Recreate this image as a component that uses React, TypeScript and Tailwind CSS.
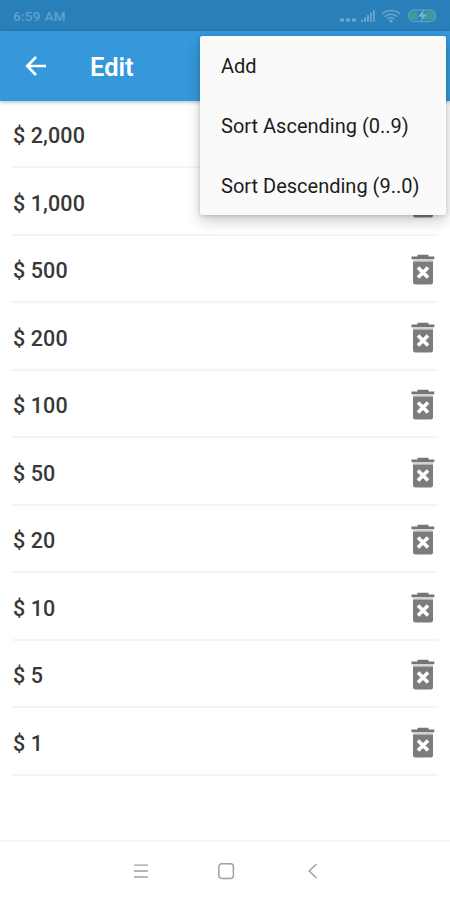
import React from "react";

const AMOUNTS = [
  "$ 2,000",
  "$ 1,000",
  "$ 500",
  "$ 200",
  "$ 100",
  "$ 50",
  "$ 20",
  "$ 10",
  "$ 5",
  "$ 1",
];

const MENU_ITEMS = ["Add", "Sort Ascending (0..9)", "Sort Descending (9..0)"];

const TrashIcon: React.FC = () => (
  <svg width="24" height="32" viewBox="0 0 24 32" className="mt-[4px] shrink-0">
    {/* lid */}
    <path d="M6.5.8h11v1.8h5.8v2.6H.5V2.6h6z" fill="#757575" />
    <path d="M2 5.2h20v2.2H2z" fill="#d2d2d2" />
    {/* bin */}
    <path d="M2 7.4h20V28a2.5 2.5 0 0 1-2.5 2.5h-15A2.5 2.5 0 0 1 2 28z" fill="#7c7c7c" />
    <path d="M7 13.4l10 10M17 13.4l-10 10" stroke="#fff" strokeWidth="3.6" />
  </svg>
);

const StatusBar: React.FC = () => (
  <div className="flex h-[31px] items-center justify-between bg-[#2980b9] pl-[13px] pr-[12px] pt-px">
    <span className="pt-px text-[13.5px] font-medium tracking-[0.3px] text-[#5fa1cf]">6:59 AM</span>
    <svg width="99" height="18" viewBox="0 0 99 18" fill="none">
      <g fill="#6ba6d0">
        <rect x="1" y="11.2" width="4" height="3.2" rx="1.2" />
        <rect x="7" y="11.2" width="4" height="3.2" rx="1.2" />
        <rect x="13" y="11.2" width="4" height="3.2" rx="1.2" />
        {/* signal */}
        <path d="M22 12.5h2v2.3h-2zM25 10.5h2v4.3h-2zM28 8h2v6.8h-2zM31 5.5h1.8v9.3H31zM34 3h1.8v11.8H34z" />
        <circle cx="52" cy="14" r="1.5" />
      </g>
      {/* wifi */}
      <g stroke="#6ba6d0" strokeWidth="1.5">
        <path d="M43 7c5-4.6 13-4.6 18 0" />
        <path d="M45.7 9.6c3.7-3.3 8.9-3.3 12.6 0" />
        <path d="M48.4 12.1c2.2-1.9 5-1.9 7.2 0" />
      </g>
      {/* battery */}
      <rect x="69.7" y="3" width="26.8" height="11.5" rx="5.5" stroke="#5b9dc9" strokeWidth="1.4" />
      <path d="M75 4.6h5l-2.5 5H81l-2 3.2h-4a4 4 0 0 1 0-8.2zM86 4.6h5.5a4 4 0 0 1 0 8.2H84l4-5.2h-3z" fill="#3e9c97" />
      <path d="M85 2.6l-6 7h4l-1.5 5 6.5-7h-4z" fill="#7fb3d6" />
    </svg>
  </div>
);

const AppBar: React.FC = () => (
  <header className="flex h-[69.5px] items-center bg-[#3498db] pl-[25px] shadow-[0_1px_4px_rgba(0,0,0,0.3)]">
    <svg width="22" height="22" viewBox="0 0 22 22" fill="none" stroke="#fff" strokeWidth="2.6">
      <path d="M21 11H3M11 2l-8.8 9 8.8 9" />
    </svg>
    <h1 className="ml-[43px] pt-[3px] text-[25.5px] font-semibold leading-none text-white">Edit</h1>
  </header>
);

const OverflowMenu: React.FC = () => (
  <div className="absolute left-[200px] top-[36px] z-10 w-[246px] rounded-[2px] bg-[#fafafa] shadow-[0_6px_14px_rgba(0,0,0,0.2),0_1px_4px_rgba(0,0,0,0.15)]">
    {MENU_ITEMS.map((item) => (
      <button
        key={item}
        className="flex h-[60px] w-full items-center pl-[21px] text-[20px] text-[#1c1c1c] last:h-[59px]"
      >
        {item}
      </button>
    ))}
  </div>
);

const NavBar: React.FC = () => (
  <nav className="flex h-[60px] items-center border-t-2 border-[#f6f6f6] pb-px pl-[133px] text-[#a0a0a0]">
    <svg width="16" height="18" viewBox="0 0 16 18" stroke="currentColor" strokeWidth="1.3">
      <path d="M1 3.2h14M1 9h14M1 15h14" />
    </svg>
    <svg width="18" height="18" viewBox="0 0 18 18" className="ml-[68px]" fill="none" stroke="currentColor" strokeWidth="1.5">
      <rect x="1.8" y="1.8" width="14.6" height="14.6" rx="3" />
    </svg>
    <svg width="12" height="18" viewBox="0 0 12 18" className="ml-[72px]" fill="none" stroke="currentColor" strokeWidth="1.5">
      <path d="M9.5 2L2.2 9l7.3 7" />
    </svg>
  </nav>
);

export default function App() {
  return (
    <div className="relative flex h-[900px] w-[450px] flex-col overflow-hidden bg-white font-['Roboto',sans-serif]">
      <StatusBar />
      <AppBar />

      {/* Amount list */}
      <ul className="flex-1 px-3">
        {AMOUNTS.map((amount) => (
          <li
            key={amount}
            className="flex h-[67.5px] items-center justify-between border-b-2 border-[#f4f4f4] pl-px pr-[3px]"
          >
            <span className="pt-[6px] text-[21.5px] font-medium tracking-[0.1px] text-[#383838]">{amount}</span>
            <TrashIcon />
          </li>
        ))}
      </ul>

      <NavBar />
      <OverflowMenu />
    </div>
  );
}
